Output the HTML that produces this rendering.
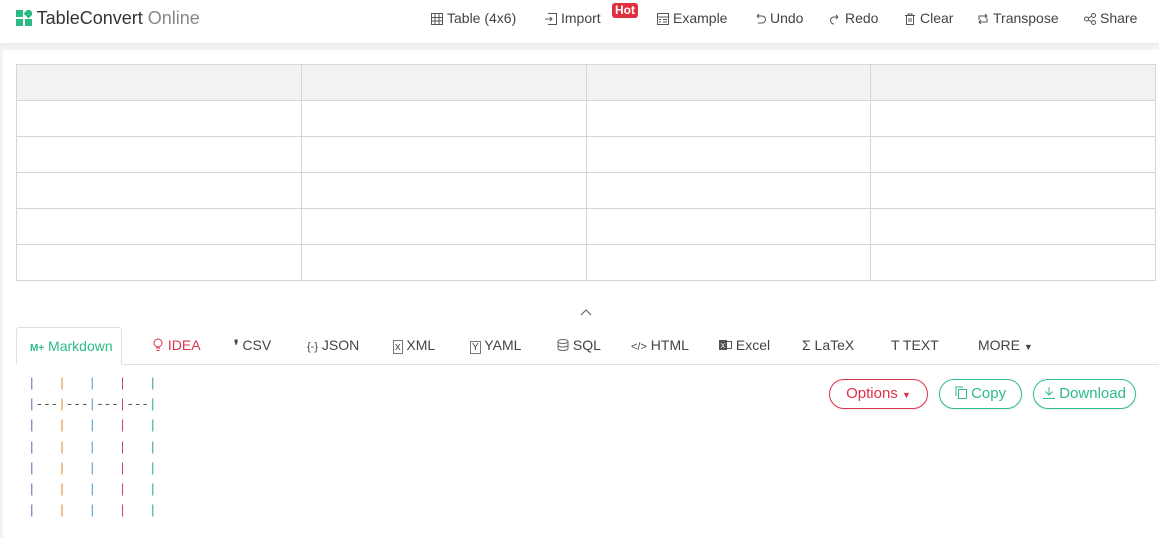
<!DOCTYPE html>
<html><head><meta charset="utf-8"><style>
*{margin:0;padding:0;box-sizing:border-box}
body{width:1159px;height:538px;overflow:hidden;background:#f2f3f5;font-family:"Liberation Sans",sans-serif;position:relative}
.hdr{position:absolute;left:0;top:0;width:1159px;height:43px;background:#fff;box-shadow:0 1px 4px rgba(0,0,0,.06)}
.logo{position:absolute;left:16px;top:8px;font-size:18px;color:#333}
.logo span{color:#888}
.nav{position:absolute;top:10px;font-size:14px;color:#444;white-space:nowrap}
.nav svg{vertical-align:-2px;margin-right:4px}
.hot{position:absolute;left:612px;top:3px;background:#e0303f;color:#fff;font-weight:bold;font-size:12px;padding:0 3px;border-radius:3px;line-height:15px}
.panel{position:absolute;left:3px;top:50px;width:1156px;height:488px;background:#fff}
table{position:absolute;left:16px;top:64px;border-collapse:collapse;width:1140px;table-layout:fixed}
td{border:1px solid #d6d6d6;height:36px}
tr:first-child td{background:#f2f2f2}
.tabs{position:absolute;left:16px;top:327px;width:1143px;height:38px;border-bottom:1px solid #e0e0e0}
.tab{position:absolute;top:0;height:38px;line-height:37px;font-size:14px;color:#444;white-space:nowrap}
.act{border:1px solid #e0e0e0;border-bottom:1px solid #fff;border-radius:3px 3px 0 0;background:#fff;padding:0 13px;color:#2dbb85;left:0;width:106px}
pre{position:absolute;left:28px;top:374px;font-family:"Liberation Mono",monospace;font-size:12.6px;line-height:21.2px;color:#555}
.a{color:#5c68c9}.b{color:#d98a2d}.c{color:#4aa0d8}.d{color:#c9455d}.e{color:#2aa89a}
.btn{position:absolute;top:379px;height:30px;border:1px solid;border-radius:15px;font-size:15px;line-height:28px;text-align:center;box-shadow:0 1px 3px rgba(0,0,0,.08)}
</style></head><body>
<div class="hdr">
<div class="logo"><svg width="16" height="16" viewBox="0 0 16 16" style="vertical-align:-2px"><rect x="0" y="0" width="7" height="7" fill="#2dbb85"/><rect x="9" y="0" width="7" height="7" fill="#2dbb85" transform="rotate(45 12.5 3.5)"/><rect x="0" y="9" width="7" height="7" fill="#2dbb85"/><rect x="9" y="9" width="7" height="7" fill="#2dbb85"/></svg> TableConvert <span>Online</span></div>
<div class="nav" style="left:431px"><svg width="12" height="12"><rect x=".5" y=".5" width="11" height="11" fill="none" stroke="#555"/><path d="M0 4.5h12M0 8h12M4 0v12M8 0v12" stroke="#555"/></svg>Table (4x6)</div>
<div class="nav" style="left:545px"><svg width="12" height="12"><path d="M3 .5h8.5v11H3M0 6h7M5 4l2 2-2 2" fill="none" stroke="#555"/></svg>Import</div>
<div class="hot">Hot</div>
<div class="nav" style="left:657px"><svg width="12" height="12"><rect x=".5" y=".5" width="11" height="11" fill="none" stroke="#555"/><path d="M0 4h12M6 6.5h4M6 9h4M2 6.5h2M2 9h2" stroke="#555"/></svg>Example</div>
<div class="nav" style="left:754px"><svg width="12" height="12"><path d="M3 3h5a3.5 3.5 0 010 7H4M3 3l2-2M3 3l2 2" fill="none" stroke="#555"/></svg>Undo</div>
<div class="nav" style="left:829px"><svg width="12" height="12"><path d="M9 4H5a3.5 3.5 0 000 7M9 4L7 2M9 4L7 6" fill="none" stroke="#555"/></svg>Redo</div>
<div class="nav" style="left:904px"><svg width="12" height="12"><path d="M1 2.5h10M4 2.5V1h4v1.5M2.5 2.5v9h7v-9M5 5v4M7 5v4" fill="none" stroke="#555"/></svg>Clear</div>
<div class="nav" style="left:977px"><svg width="12" height="12"><path d="M2 7V3h8M8 1l2 2-2 2M10 5v4H2M4 11L2 9l2-2" fill="none" stroke="#555"/></svg>Transpose</div>
<div class="nav" style="left:1084px"><svg width="12" height="12"><circle cx="9.5" cy="2.5" r="2" fill="none" stroke="#555"/><circle cx="2.5" cy="6" r="2" fill="none" stroke="#555"/><circle cx="9.5" cy="9.5" r="2" fill="none" stroke="#555"/><path d="M4.3 5l3.4-1.7M4.3 7l3.4 1.7" stroke="#555"/></svg>Share</div>
</div>
<div class="panel"></div>
<table>
<tr><td></td><td></td><td></td><td></td></tr>
<tr><td></td><td></td><td></td><td></td></tr>
<tr><td></td><td></td><td></td><td></td></tr>
<tr><td></td><td></td><td></td><td></td></tr>
<tr><td></td><td></td><td></td><td></td></tr>
<tr><td></td><td></td><td></td><td></td></tr>
</table>
<svg style="position:absolute;left:580px;top:309px" width="12" height="8"><path d="M1 6l5-5 5 5" fill="none" stroke="#555"/></svg>
<div class="tabs">
<div class="tab act"><b style="font-size:10px">M+</b> Markdown</div>
<div class="tab" style="left:136px;color:#e0304a"><svg width="12" height="14" style="vertical-align:-2px"><circle cx="6" cy="5" r="4" fill="none" stroke="#e0304a"/><path d="M4 10h4M4.5 12.5h3" stroke="#e0304a"/></svg> IDEA</div>
<div class="tab" style="left:218px"><b>❜</b>  CSV</div>
<div class="tab" style="left:291px"><span style="font-size:11px">{-}</span> JSON</div>
<div class="tab" style="left:377px"><span style="font-size:11px;border:1px solid #777;padding:0 1px">x</span> XML</div>
<div class="tab" style="left:454px"><span style="font-size:10px;border:1px solid #777;padding:0 1px">Y</span> YAML</div>
<div class="tab" style="left:541px"><svg width="12" height="12" style="vertical-align:-1px"><ellipse cx="6" cy="2.5" rx="5" ry="2" fill="none" stroke="#666"/><path d="M1 2.5v7c0 2.7 10 2.7 10 0v-7M1 6c0 2.7 10 2.7 10 0" fill="none" stroke="#666"/></svg> SQL</div>
<div class="tab" style="left:615px"><span style="font-size:11px">&lt;/&gt;</span> HTML</div>
<div class="tab" style="left:703px"><svg width="13" height="12" style="vertical-align:-1px"><rect x="0" y="1" width="8" height="10" fill="#555"/><rect x="7.5" y="2.5" width="5" height="7" fill="none" stroke="#555"/><text x="1.5" y="9" font-size="7" fill="#fff" font-family="Liberation Sans">X</text></svg> Excel</div>
<div class="tab" style="left:786px">Σ LaTeX</div>
<div class="tab" style="left:875px">T  TEXT</div>
<div class="tab" style="left:962px">MORE <span style="font-size:9px">▼</span></div>
</div>
<pre><span class="a">|</span>   <span class="b">|</span>   <span class="c">|</span>   <span class="d">|</span>   <span class="e">|</span>
<span class="a">|</span>---<span class="b">|</span>---<span class="c">|</span>---<span class="d">|</span>---<span class="e">|</span>
<span class="a">|</span>   <span class="b">|</span>   <span class="c">|</span>   <span class="d">|</span>   <span class="e">|</span>
<span class="a">|</span>   <span class="b">|</span>   <span class="c">|</span>   <span class="d">|</span>   <span class="e">|</span>
<span class="a">|</span>   <span class="b">|</span>   <span class="c">|</span>   <span class="d">|</span>   <span class="e">|</span>
<span class="a">|</span>   <span class="b">|</span>   <span class="c">|</span>   <span class="d">|</span>   <span class="e">|</span>
<span class="a">|</span>   <span class="b">|</span>   <span class="c">|</span>   <span class="d">|</span>   <span class="e">|</span></pre>
<div class="btn" style="left:829px;width:99px;border-color:#e0304a;color:#e0304a">Options <span style="font-size:9px">▼</span></div>
<div class="btn" style="left:939px;width:83px;border-color:#2dbb85;color:#2dbb85"><svg width="12" height="13" style="vertical-align:-1px"><rect x="3.5" y="3.5" width="8" height="9" fill="none" stroke="#2dbb85"/><path d="M1 10V1h7" fill="none" stroke="#2dbb85"/></svg> Copy</div>
<div class="btn" style="left:1033px;width:103px;border-color:#2dbb85;color:#2dbb85"><svg width="12" height="12" style="vertical-align:-1px"><path d="M6 0v8M2.5 4.5L6 8l3.5-3.5M0 11.5h12" fill="none" stroke="#2dbb85"/></svg> Download</div>
</body></html>
